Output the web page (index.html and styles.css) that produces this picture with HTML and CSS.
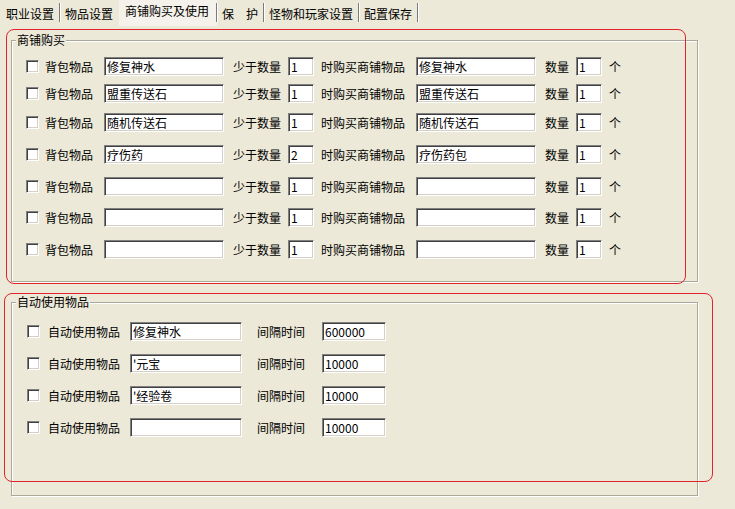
FILE: index.html
```html
<!DOCTYPE html>
<html>
<head>
<meta charset="utf-8">
<link rel="stylesheet" href="styles.css">
</head>
<body>
<div class="tabs">
  <div class="tab first">职业设置</div>
  <div class="tab before-active">物品设置</div>
  <div class="tab active">商铺购买及使用</div>
  <div class="tab">保　护</div>
  <div class="tab">怪物和玩家设置</div>
  <div class="tab">配置保存</div>
</div>
<div class="content">
  <fieldset class="group g1">
    <legend>商铺购买</legend>
    <div class="rows">
      <div class="row"><span class="cb"></span><span class="l1">背包物品</span><span class="field w120">修复神水</span><span class="l2">少于数量</span><span class="field w26">1</span><span class="l3">时购买商铺物品</span><span class="field w120">修复神水</span><span class="l4">数量</span><span class="field w26">1</span><span class="l5">个</span></div>
      <div class="row"><span class="cb"></span><span class="l1">背包物品</span><span class="field w120">盟重传送石</span><span class="l2">少于数量</span><span class="field w26">1</span><span class="l3">时购买商铺物品</span><span class="field w120">盟重传送石</span><span class="l4">数量</span><span class="field w26">1</span><span class="l5">个</span></div>
      <div class="row"><span class="cb"></span><span class="l1">背包物品</span><span class="field w120">随机传送石</span><span class="l2">少于数量</span><span class="field w26">1</span><span class="l3">时购买商铺物品</span><span class="field w120">随机传送石</span><span class="l4">数量</span><span class="field w26">1</span><span class="l5">个</span></div>
      <div class="row"><span class="cb"></span><span class="l1">背包物品</span><span class="field w120">疗伤药</span><span class="l2">少于数量</span><span class="field w26">2</span><span class="l3">时购买商铺物品</span><span class="field w120">疗伤药包</span><span class="l4">数量</span><span class="field w26">1</span><span class="l5">个</span></div>
      <div class="row"><span class="cb"></span><span class="l1">背包物品</span><span class="field w120"></span><span class="l2">少于数量</span><span class="field w26">1</span><span class="l3">时购买商铺物品</span><span class="field w120"></span><span class="l4">数量</span><span class="field w26">1</span><span class="l5">个</span></div>
      <div class="row"><span class="cb"></span><span class="l1">背包物品</span><span class="field w120"></span><span class="l2">少于数量</span><span class="field w26">1</span><span class="l3">时购买商铺物品</span><span class="field w120"></span><span class="l4">数量</span><span class="field w26">1</span><span class="l5">个</span></div>
      <div class="row"><span class="cb"></span><span class="l1">背包物品</span><span class="field w120"></span><span class="l2">少于数量</span><span class="field w26">1</span><span class="l3">时购买商铺物品</span><span class="field w120"></span><span class="l4">数量</span><span class="field w26">1</span><span class="l5">个</span></div>
    </div>
  </fieldset>
  <fieldset class="group g2">
    <legend>自动使用物品</legend>
    <div class="rows">
      <div class="row"><span class="cb cb2"></span><span class="a1">自动使用物品</span><span class="field w112">修复神水</span><span class="a2">间隔时间</span><span class="field w64">600000</span></div>
      <div class="row"><span class="cb cb2"></span><span class="a1">自动使用物品</span><span class="field w112">'元宝</span><span class="a2">间隔时间</span><span class="field w64">10000</span></div>
      <div class="row"><span class="cb cb2"></span><span class="a1">自动使用物品</span><span class="field w112">'经验卷</span><span class="a2">间隔时间</span><span class="field w64">10000</span></div>
      <div class="row"><span class="cb cb2"></span><span class="a1">自动使用物品</span><span class="field w112"></span><span class="a2">间隔时间</span><span class="field w64">10000</span></div>
    </div>
  </fieldset>
</div>
<div class="mark m1"></div>
<div class="mark m2"></div>
</body>
</html>
```
FILE: styles.css
```css
html, body {
  margin: 0;
  padding: 0;
  background: #ece9d8;
}
body {
  width: 735px;
  height: 509px;
  overflow: hidden;
  position: relative;
  font-family: "Noto Sans CJK SC", "Noto Sans", sans-serif;
  font-size: 12px;
  color: #000;
}
.tabs {
  display: flex;
  height: 26px;
  padding-left: 1px;
  align-items: stretch;
}
.tab {
  padding: 7px 6px 0 5px;
  line-height: 14px;
  box-sizing: border-box;
  height: 26px;
  position: relative;
  white-space: nowrap;
}
.tab::after {
  content: "";
  position: absolute;
  right: 0;
  top: 3px;
  height: 19px;
  width: 1px;
  background: #7a7a7a;
  box-shadow: 1px 0 0 #fff;
}
.tab.before-active::after { display: none; }
.tab.active {
  background: #f4f2ea;
  padding: 4px 8px 0 6px;
}
.content {
  padding-left: 11px;
}
.group {
  margin: 0;
  padding: 0;
  width: 687px;
  box-sizing: border-box;
  border: 1px solid #aca899;
  box-shadow: 1px 1px 0 #fff, inset 1px 1px 0 #fff;
}
.group legend {
  margin-left: 4px;
  padding: 0 1px;
  line-height: 14px;
  background: #ece9d8;
}
.g1 { margin-top: 7px; }
.g2 { margin-top: 13px; }
.rows {
  display: flex;
  flex-direction: column;
  padding-left: 14px;
}
.g1 .rows { padding-top: 10px; padding-bottom: 22px; }
.g2 .rows { padding-top: 13px; padding-bottom: 58px; gap: 13px; }
.row {
  display: flex;
  align-items: center;
  height: 19px;
  white-space: nowrap;
}
.g1 .row:nth-child(2) { margin-top: 8px; }
.g1 .row:nth-child(3) { margin-top: 10px; }
.g1 .row:nth-child(4) { margin-top: 13px; }
.g1 .row:nth-child(5) { margin-top: 13px; }
.g1 .row:nth-child(6) { margin-top: 12px; }
.g1 .row:nth-child(7) { margin-top: 13px; }
.cb {
  width: 13px;
  height: 13px;
  box-sizing: border-box;
  background: #fff;
  border: 1px solid;
  border-color: #808080 #fff #fff #808080;
  box-shadow: inset 1px 1px 0 #404040, inset -1px -1px 0 #d4d0c8;
  margin-right: 6px;
  flex: none;
}
.cb2 { margin-left: 1px; margin-right: 8px; }
.field {
  height: 19px;
  box-sizing: border-box;
  background: #fff;
  border: 1px solid;
  border-color: #808080 #fff #fff #808080;
  box-shadow: inset 1px 1px 0 #404040, inset -1px -1px 0 #d4d0c8;
  padding: 1px 0 0 2px;
  line-height: 15px;
  overflow: hidden;
  flex: none;
}
.w120 { width: 120px; }
.w26 { width: 26px; }
.w112 { width: 112px; }
.w64 { width: 64px; }
.l1 { width: 59px; }
.l2 { width: 55px; margin-left: 9px; }
.l3 { width: 95px; margin-left: 7px; }
.l4 { width: 31px; margin-left: 9px; }
.l5 { margin-left: 7px; }
.a1 { width: 82px; }
.a2 { width: 65px; margin-left: 15px; }
.l1, .l2, .l3, .l4, .l5, .a1, .a2 { line-height: 14px; flex: none; }
.mark {
  position: absolute;
  border: 1px solid #e0242a;
  border-radius: 8px;
  box-sizing: border-box;
  pointer-events: none;
}
.m1 { left: 6px; top: 29px; width: 680px; height: 255px; }
.m2 { left: 4px; top: 293px; width: 709px; height: 189px; }
```
